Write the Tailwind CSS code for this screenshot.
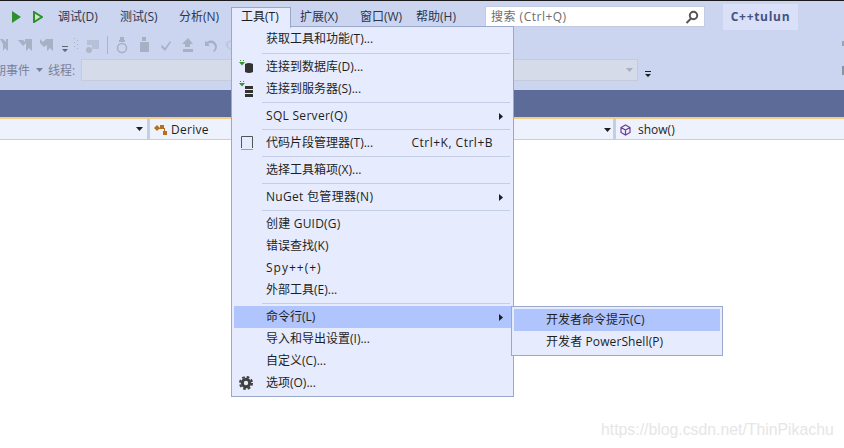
<!DOCTYPE html>
<html lang="zh-CN">
<head>
  <meta charset="UTF-8">
  <title>工具菜单</title>
  <script src="https://cdn.jsdelivr.net/npm/@tailwindcss/browser@4"></script>
</head>
<body class="relative w-[844px] h-[448px] overflow-hidden bg-white text-[12px] text-[#1e1e1e] font-['Open_Sans','Noto_Sans_CJK_SC',sans-serif]">

  <!-- Window chrome -->
  <div class="relative h-[90px] bg-[#ccd5f0] border-t border-[#1a1a1a]">
    <!-- Menu bar -->
    <div class="flex items-start h-[32px]">
      <div class="flex items-center gap-[12px] pl-[12px] pt-[10px] w-[48px]">
        <svg width="9" height="12" viewBox="0 0 9 12"><path d="M0 0 L9 6 L0 12 Z" fill="#2f8f2f"/></svg>
        <svg width="10" height="12" viewBox="0 0 10 12"><path d="M1 1 L9 6 L1 11 Z" fill="#cfe8c4" stroke="#2f8f2f" stroke-width="2"/></svg>
      </div>
      <div class="flex items-center h-[31px] text-[#2b3550]">
        <span class="ml-[10px] w-[62px]">调试(D)</span>
        <span class="w-[59px]">测试(S)</span>
        <span class="w-[62px]">分析(N)</span>
        <span class="w-[59px] opacity-0">工具(T)</span>
        <span class="w-[60px]">扩展(X)</span>
        <span class="w-[56px]">窗口(W)</span>
        <span class="w-[69px]">帮助(H)</span>
      </div>
      <div class="flex items-center justify-between w-[220px] h-[21px] mt-[5px] px-[5px] pt-px bg-white border border-[#c2cbe3] text-[#6d6d6d]">
        <span class="tracking-[0.5px]">搜索 (Ctrl+Q)</span>
        <svg width="14" height="14" viewBox="0 0 14 14" fill="none" stroke="#555" stroke-width="2"><circle cx="8.5" cy="5.5" r="3.7"/><path d="M6 8.5 L1.5 13"/></svg>
      </div>
      <div class="flex items-center justify-center w-[75px] h-[26px] mt-[3px] ml-[18px] bg-[#dbe0f9] text-[#44547f] font-bold tracking-[0.7px]">C++tulun</div>
    </div>

    <!-- Toolbar icons (disabled) -->
    <div class="relative h-[24px] opacity-60">
      <svg class="absolute left-0 top-[2px]" width="240" height="20" viewBox="0 0 240 20" fill="#8f98a8">
        <path d="M0 4 h3 l3 3 v-3 h2 v12 l-3 -3 l-2 3 v-7 z"/>
        <path d="M18 5 h5 l2 2 v-3 h7 v12 l-3 -3 l-3 3 v-8 l-3 3 z"/>
        <path d="M40 4 l3 3 l3 -3 h7 v12 l-3 -3 l-3 3 v-6 l-3 2 l-4 -4 z"/>
        <rect x="74" y="3" width="1" height="1"/><rect x="77" y="5" width="1" height="1"/><rect x="74" y="7" width="1" height="1"/><rect x="77" y="9" width="1" height="1"/><rect x="74" y="11" width="1" height="1"/><rect x="77" y="13" width="1" height="1"/>
        <path d="M87 5 h12 v9 h-7 v-4 h-5 z" opacity=".55"/>
        <circle cx="89" cy="15" r="3" opacity=".8"/>
        <path d="M120 2 h4 v3 h-4 z M119 5 h6 v2 h-6 z"/><circle cx="122" cy="13" r="4.5" fill="none" stroke="#8f98a8" stroke-width="1.5"/>
        <path d="M142 2 h4 v4 h-4 z M140 7 h9 v10 h-9 z"/>
        <path d="M162 10 l3 3 l5 -7 l1 1 l-6 9 l-4 -4 z"/>
        <path d="M188 3 l5 6 h-3 v3 h-5 v-3 h-3 z M183 14 h10 v3 h-10 z"/>
        <path d="M205 6 v5 h5 l-2 -2 c3 -2 6 -1 7 3 c0 2 -1 3 -2 4 l1 1 c2 -1 3 -4 3 -6 c-1 -5 -6 -7 -10 -4 z"/>
        <path d="M226 8 c2 -3 5 -3 7 -2 v1 c-2 -1 -4 0 -5 2 c0 3 2 5 5 5 v1 c-4 0 -8 -3 -7 -7 z" opacity=".4"/>
      </svg>
      <svg class="absolute left-[62px] top-[13px]" width="7" height="7" viewBox="0 0 7 7"><path d="M0 0 h6 v1 h-6 z M0 3 h6 l-3 3 z" fill="#1e1e1e"/></svg>
      <div class="absolute left-[107px] top-[3px] w-px h-[18px] bg-[#8fa0c4]"></div>
    </div>

    <!-- Debug target row -->
    <div class="flex items-center h-[26px] text-[#7a8195] overflow-hidden">
      <span class="ml-[-18px] pt-px">周期事件</span>
      <svg class="ml-[6px]" width="7" height="4" viewBox="0 0 7 4"><path d="M0 0 h7 l-3.5 4 z" fill="#7a8195"/></svg>
      <span class="ml-[5px] pt-px">线程:</span>
      <div class="flex items-center justify-end w-[557px] h-[22px] ml-[6px] pr-[4px] bg-[#d5dbe8] border border-[#c3cbdd]">
        <svg width="7" height="4" viewBox="0 0 7 4"><path d="M0 0 h7 l-3.5 4 z" fill="#a9b0bf"/></svg>
      </div>
      <svg class="ml-[7px] mt-[8px]" width="7" height="7" viewBox="0 0 7 7"><path d="M0 0 h6 v1 h-6 z M0 3 h6 l-3 3 z" fill="#1e1e1e"/></svg>
    </div>

    <!-- Clipped toolbar pieces at the right edge -->
    <div class="absolute right-0 top-[40px] w-[2px] h-[5px] bg-[#9aa3b5]"></div>
    <div class="absolute right-0 top-[65px] w-[2px] h-[9px] bg-[#8a93a6]"></div>
  </div>

  <!-- Document tab band -->
  <div class="h-[27px] bg-[#5d6b99]"></div>
  <div class="h-[2px] bg-[#f5cc84]"></div>

  <!-- Navigation bar -->
  <div class="flex h-[21px] bg-[#eef2fc] border-b border-[#c3cfe9]">
    <div class="flex items-center justify-end w-[150px] pr-[4px] border-r-[3px] border-[#c3cfe9]">
      <svg width="7" height="4" viewBox="0 0 7 4"><path d="M0 0 h7 l-3.5 4 z" fill="#1e1e1e"/></svg>
    </div>
    <div class="flex items-center w-[466px] pl-[4px] pt-px border-r-[3px] border-[#c3cfe9]">
      <svg width="14" height="14" viewBox="0 0 14 14" fill="#b5701f"><path d="M0 5 L3 2 L6 5 L3 8 Z"/><rect x="6" y="2" width="4" height="4"/><rect x="9" y="8" width="4" height="4"/><path d="M4 5 h7 v4 h-1 v-3 h-6 z"/></svg>
      <span class="ml-[3px] tracking-[0.3px]">Derive</span>
      <svg class="ml-auto mr-[2px]" width="7" height="4" viewBox="0 0 7 4"><path d="M0 0 h7 l-3.5 4 z" fill="#1e1e1e"/></svg>
    </div>
    <div class="flex items-center pl-[4px] pt-px">
      <svg width="11" height="12" viewBox="0 0 11 12" fill="none" stroke="#6a3d9a" stroke-width="1.2"><path d="M5.5 1 L10 3.5 V8.5 L5.5 11 L1 8.5 V3.5 Z M1 3.5 L5.5 6 L10 3.5 M5.5 6 V11"/></svg>
      <span class="ml-[7px]">show()</span>
    </div>
  </div>

  <!-- Open menu title -->
  <div class="absolute left-[231px] top-[7px] z-20 w-[60px] h-[21px] pl-[9px] leading-[18px] bg-[#e6ecfd] border border-b-0 border-[#9aa8cc]">工具(T)</div>

  <!-- Tools menu -->
  <div class="absolute left-[231px] top-[26px] z-10 w-[283px] h-[371px] px-[2px] py-px bg-[#e6ecfd] border border-[#9aa8cc]">
    <div class="flex items-center h-[22px] pl-[32px]">获取工具和功能(T)...</div>
    <div class="h-[6px] ml-[28px] mr-px flex items-center"><div class="w-full h-px bg-[#c3cde8]"></div></div>
    <div class="relative flex items-center h-[22px] pl-[32px]">
      <svg class="absolute left-[5px] top-[4px]" width="15" height="15" viewBox="0 0 15 15"><path d="M1 0 h1 v1 h-1 z M4 0 h1 v1 h-1 z M0 2 h6 l-3 3.5 z" fill="#3c8f2f"/><path d="M6 4 q4 -2 8 0 v8 q-4 2 -8 0 z" fill="#333"/></svg>
      连接到数据库(D)...
    </div>
    <div class="relative flex items-center h-[22px] pl-[32px]">
      <svg class="absolute left-[5px] top-[3px]" width="15" height="16" viewBox="0 0 15 16"><path d="M1 0 h1 v1 h-1 z M4 0 h1 v1 h-1 z M0 2 h6 l-3 3.5 z" fill="#3c8f2f"/><path d="M6 5 h8 v3 h-8 z M6 9 h8 v3 h-8 z M6 13 h8 v3 h-8 z" fill="#333"/></svg>
      连接到服务器(S)...
    </div>
    <div class="h-[5px] ml-[28px] mr-px flex items-center"><div class="w-full h-px bg-[#c3cde8]"></div></div>
    <div class="flex items-center h-[22px] pl-[32px] pr-[8px]">
      <span class="tracking-[0.3px]">SQL Server(Q)</span>
      <svg class="ml-auto" width="4" height="7" viewBox="0 0 4 7"><path d="M0 0 L4 3.5 L0 7 Z" fill="#1e1e1e"/></svg>
    </div>
    <div class="h-[5px] ml-[28px] mr-px flex items-center"><div class="w-full h-px bg-[#c3cde8]"></div></div>
    <div class="relative flex items-center h-[22px] pl-[32px] pr-[18px]">
      <svg class="absolute left-[7px] top-[4px]" width="12" height="14" viewBox="0 0 12 14" fill="none" stroke="#555"><path d="M.5 12 V.5 H11.5 V12"/><path d="M.5 13.5 H11.5" stroke-dasharray="1 1"/></svg>
      <span>代码片段管理器(T)...</span>
      <span class="ml-auto tracking-[0.5px]">Ctrl+K, Ctrl+B</span>
    </div>
    <div class="h-[5px] ml-[28px] mr-px flex items-center"><div class="w-full h-px bg-[#c3cde8]"></div></div>
    <div class="flex items-center h-[22px] pl-[32px]">选择工具箱项(X)...</div>
    <div class="h-[5px] ml-[28px] mr-px flex items-center"><div class="w-full h-px bg-[#c3cde8]"></div></div>
    <div class="flex items-center h-[22px] pl-[32px] pr-[8px]">
      <span class="tracking-[0.3px]">NuGet 包管理器(N)</span>
      <svg class="ml-auto" width="4" height="7" viewBox="0 0 4 7"><path d="M0 0 L4 3.5 L0 7 Z" fill="#1e1e1e"/></svg>
    </div>
    <div class="h-[5px] ml-[28px] mr-px flex items-center"><div class="w-full h-px bg-[#c3cde8]"></div></div>
    <div class="flex items-center h-[22px] pl-[32px] tracking-[0.2px]">创建 GUID(G)</div>
    <div class="flex items-center h-[22px] pl-[32px]">错误查找(K)</div>
    <div class="flex items-center h-[22px] pl-[32px] tracking-[1px]">Spy++(+)</div>
    <div class="flex items-center h-[22px] pl-[32px]">外部工具(E)...</div>
    <div class="h-[5px] ml-[28px] mr-px flex items-center"><div class="w-full h-px bg-[#c3cde8]"></div></div>
    <div class="flex items-center h-[22px] pl-[32px] pr-[8px] bg-[#b0c4fd]">
      <span>命令行(L)</span>
      <svg class="ml-auto" width="4" height="7" viewBox="0 0 4 7"><path d="M0 0 L4 3.5 L0 7 Z" fill="#1e1e1e"/></svg>
    </div>
    <div class="flex items-center h-[22px] pl-[32px]">导入和导出设置(I)...</div>
    <div class="flex items-center h-[22px] pl-[32px]">自定义(C)...</div>
    <div class="relative flex items-center h-[22px] pl-[32px]">
      <svg class="absolute left-[5px] top-[4px]" width="14" height="14" viewBox="0 0 14 14"><circle cx="7" cy="7" r="5.2" fill="#404040"/><circle cx="7" cy="7" r="6" fill="none" stroke="#404040" stroke-width="2" stroke-dasharray="2.7 2.01"/><circle cx="7" cy="7" r="2.2" fill="#e6ecfd"/></svg>
      选项(O)...
    </div>
  </div>

  <!-- Command line submenu -->
  <div class="absolute left-[511px] top-[306px] z-20 w-[212px] h-[50px] p-[2px] bg-[#e6ecfd] border border-[#9aa8cc]">
    <div class="flex items-center h-[22px] pl-[32px] bg-[#b0c4fd]">开发者命令提示(C)</div>
    <div class="flex items-center h-[22px] pl-[32px] tracking-[0.1px]">开发者 PowerShell(P)</div>
  </div>

  <!-- Watermark -->
  <div class="absolute left-[601px] top-[419px] text-[15.8px] leading-[22px] text-[#e6e6e6] font-['Liberation_Sans',sans-serif]">https://blog.csdn.net/ThinPikachu</div>
</body>
</html>
